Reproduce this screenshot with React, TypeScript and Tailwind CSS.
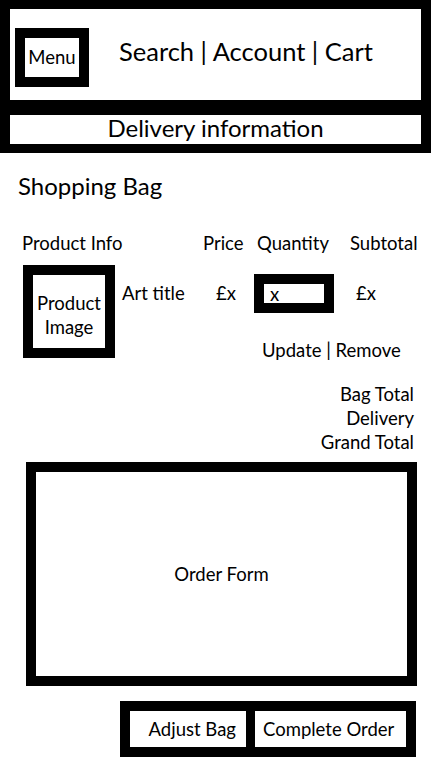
import React from 'react';

const App: React.FC = () => {
  return (
    <div className="w-[431px] min-h-[767px] bg-white text-black font-['Lato',sans-serif]">
      {/* Top frame: header + delivery strip */}
      <div className="bg-black pt-[9px] pb-[9px] pl-[10px] pr-[10px] flex flex-col gap-[15px]">
        <div className="bg-white h-[91px] flex items-start pt-[19px] pl-[5px]">
          <div className="w-[74px] h-[59px] border-[10px] border-black bg-white flex items-center justify-center text-[18.5px] leading-none">
            Menu
          </div>
          <div className="ml-[30px] mt-[11px] text-[25.5px] leading-none whitespace-nowrap">
            Search | Account | Cart
          </div>
        </div>
        <div className="bg-white h-[29px] flex items-start justify-center pt-[1px] text-[24px] leading-none">
          Delivery information
        </div>
      </div>

      <div className="pl-[18px] mt-[21px] text-[24px] leading-[24px]">Shopping Bag</div>

      {/* Table headings */}
      <div className="flex mt-[35px] text-[18.5px] leading-[20px] whitespace-nowrap">
        <div className="w-[203px] pl-[22px]">Product Info</div>
        <div className="w-[54px]">Price</div>
        <div className="w-[93px]">Quantity</div>
        <div>Subtotal</div>
      </div>

      {/* Product row */}
      <div className="flex items-start mt-[12px] text-[18.5px] leading-[20px] whitespace-nowrap">
        <div className="ml-[23px] w-[92px] h-[93px] border-[10px] border-black flex items-center justify-center pt-[6px] text-center leading-[24px]">
          Product
          <br />
          Image
        </div>
        <div className="ml-[7px] mt-[18px] w-[94px]">Art title</div>
        <div className="mt-[18px] w-[38px]">£x</div>
        <div className="mt-[9px] w-[80px] h-[39px] border-[10px] border-black flex items-center pl-[6px]">x</div>
        <div className="ml-[22px] mt-[18px]">£x</div>
      </div>

      <div className="flex mt-[-18px] pl-[262px] text-[18.5px] leading-[20px] whitespace-nowrap">Update | Remove</div>

      {/* Totals */}
      <div className="flex flex-col items-end pr-[17px] mt-[22px] text-[18.5px] leading-[24px]">
        <div>Bag Total</div>
        <div>Delivery</div>
        <div>Grand Total</div>
      </div>

      {/* Order form */}
      <div className="ml-[26px] mt-[8px] w-[391px] h-[224px] border-[10px] border-black flex items-center justify-center pt-[2px] text-[18.5px]">
        Order Form
      </div>

      {/* Actions */}
      <div className="ml-[120px] mt-[15px] w-[296px] h-[56px] bg-black p-[10px] flex gap-[9px] text-[18.5px] leading-none whitespace-nowrap">
        <div className="bg-white w-[116px] flex items-center justify-end pr-[10px]">Adjust Bag</div>
        <div className="bg-white flex-1 flex items-center pl-[8px]">Complete Order</div>
      </div>
    </div>
  );
};

export default App;
